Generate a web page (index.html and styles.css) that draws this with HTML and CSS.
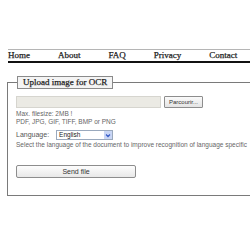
FILE: index.html
```html
<!DOCTYPE html>
<html>
<head>
<meta charset="utf-8">
<link rel="stylesheet" href="styles.css">
</head>
<body>
<div class="page">
  <div class="wrap">
    <div class="header"></div>
    <nav class="nav">
      <span class="nav-item">Home</span>
      <span class="nav-item">About</span>
      <span class="nav-item">FAQ</span>
      <span class="nav-item">Privacy</span>
      <span class="nav-item">Contact</span>
    </nav>
    <fieldset class="box">
      <legend class="legend">Upload image for OCR</legend>
      <div class="file-row">
        <span class="file-field"></span>
        <span class="browse">Parcourir...</span>
      </div>
      <div class="hints">
        <div class="hint">Max. filesize: 2MB !</div>
        <div class="hint">PDF, JPG, GIF, TIFF, BMP or PNG</div>
      </div>
      <div class="lang-row">
        <span class="label">Language:</span>
        <span class="select"><span class="select-text">English</span><span class="select-btn"><svg width="6" height="5" viewBox="0 0 6 5"><path d="M1 1.5 L3 3.5 L5 1.5" fill="none" stroke="#3a5fc8" stroke-width="1.3"/></svg></span></span>
      </div>
      <div class="lang-hint">Select the language of the document to improve recognition of language specific</div>
      <div class="send">Send file</div>
    </fieldset>
  </div>
</div>
</body>
</html>
```
FILE: styles.css
```css
html, body {
  margin: 0;
  padding: 0;
  background: #fff;
}
.page {
  width: 250px;
  height: 250px;
  overflow: hidden;
}
.wrap {
  width: 340px;
  padding-left: 8px;
}
.header {
  height: 49px;
}
.nav {
  display: flex;
  gap: 28px;
  border-top: 1px solid #b5b5b5;
  border-bottom: 2px solid #111;
  height: 11px;
  align-items: center;
  font-family: "Liberation Serif", serif;
  font-size: 9px;
  color: #222;
  line-height: 9px;
  -webkit-text-stroke: 0.25px #222;
}
.box {
  margin: 13px 0 0 -1px;
  border: 1px solid #7a7a7a;
  padding: 7px 8px 17px 8px;
  font-family: "Liberation Sans", Arial, sans-serif;
  color: #555;
}
.legend {
  margin-left: 1px;
  padding: 1px 5px;
  border: 1px solid #8a8a8a;
  background: #f4f4f4;
  font-family: "Liberation Serif", serif;
  font-size: 9px;
  line-height: 9px;
  color: #222;
  -webkit-text-stroke: 0.25px #222;
}
.file-row {
  display: flex;
  align-items: center;
  gap: 3px;
}
.file-field {
  display: block;
  width: 143px;
  height: 10px;
  background: #ebeae4;
  border: 1px solid #d6d5cf;
}
.browse {
  display: block;
  width: 37px;
  height: 10px;
  border: 1px solid #8d8d8d;
  border-radius: 1px;
  background: linear-gradient(#fafafa, #e4e4e4);
  font-size: 6px;
  line-height: 10px;
  text-align: center;
  color: #333;
}
.hints {
  margin-top: 2px;
}
.hint {
  font-size: 6.5px;
  line-height: 8px;
  color: #666;
}
.lang-row {
  display: flex;
  align-items: center;
  gap: 7px;
  margin-top: 4px;
}
.label {
  font-size: 7px;
  line-height: 8px;
  color: #555;
}
.select {
  display: flex;
  width: 55px;
  height: 8px;
  border: 1px solid #9aa9bd;
  background: #fff;
}
.select-text {
  flex: 1;
  font-size: 6.5px;
  line-height: 8px;
  padding-left: 2px;
  color: #222;
}
.select-btn {
  width: 8px;
  height: 8px;
  background: #c9d6f5;
  display: flex;
  align-items: center;
  justify-content: center;
}
.lang-hint {
  font-size: 6.5px;
  line-height: 8px;
  color: #666;
  white-space: nowrap;
  margin-top: 1px;
}
.send {
  margin-top: 16px;
  width: 118px;
  height: 11px;
  border: 1px solid #8d8d8d;
  border-radius: 2px;
  background: linear-gradient(#fdfdfd, #e8e8e8);
  font-size: 7px;
  line-height: 11px;
  text-align: center;
  color: #333;
}
```
